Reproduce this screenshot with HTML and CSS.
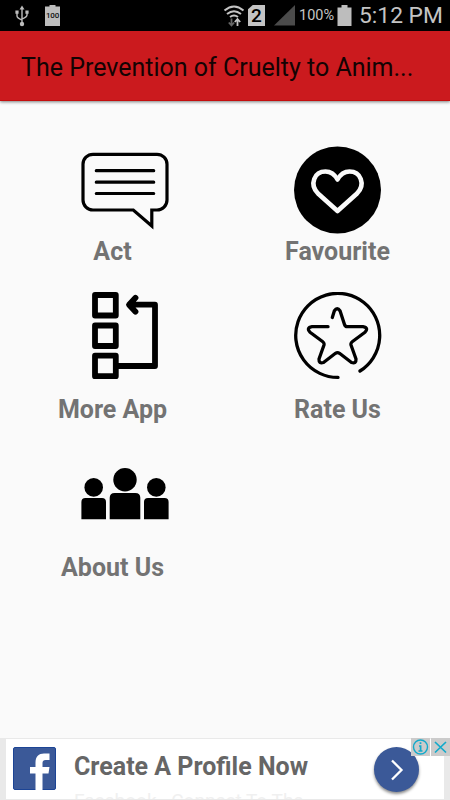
FILE: index.html
```html
<!DOCTYPE html>
<html lang="en">
<head>
    <meta charset="UTF-8">
    <meta name="viewport" content="width=device-width, initial-scale=1.0">
    <title>The Prevention of Cruelty to Animals</title>
    <link rel="stylesheet" href="styles.css">
</head>
<body>
    <div class="status-bar">
        <svg class="usb" width="14" height="22" viewBox="0 0 14 22" fill="none" stroke="#bdbdbd" stroke-width="1.4">
            <path d="M7 3v15M2 8v3q0 2 5 4M12 7v3q0 2-5 4"/>
            <path d="M4.500 4.500L7 .5l2.500 4zM.4 5.500h3.200v3.200H.4zM10.400 5.500h3.200v3.200h-3.200z" fill="#bdbdbd" stroke="none"/>
            <circle cx="7" cy="19" r="2.200" fill="#bdbdbd" stroke="none"/>
        </svg>
        <div class="battery-badge"><span>100</span></div>
        <svg class="wifi" width="22" height="22" viewBox="0 0 22 22" fill="none" stroke="#c4c4c4" stroke-width="2">
            <path d="M1.500 5.500Q11-2.500 20.500 5.500M4 9q7-5.500 14 0M7 12q4-3 8 0"/>
            <path d="M14.500 21v-7M11.800 17l2.700-3 2.700 3" stroke-width="1.800"/>
            <path d="M8.500 13.500v7M5.800 17.500l2.700 3 2.700-3" stroke="#666" stroke-width="1.800"/>
        </svg>
        <div class="sim"><span>2</span></div>
        <svg class="signal" width="21" height="21" viewBox="0 0 21 21"><path d="M0 20.500L21 0v20.500z" fill="#4b4b4b"/></svg>
        <span class="percent">100%</span>
        <svg class="battery" width="15" height="21" viewBox="0 0 15 21"><path d="M4.500 0h6v2.500H14.500V21H.5V2.500h4z" fill="#bdbdbd"/></svg>
        <span class="clock">5:12 PM</span>
    </div>

    <header class="toolbar">
        <h1>The Prevention of Cruelty to Anim...</h1>
    </header>

    <main class="menu">
        <div class="item first shifted">
            <svg viewBox="0 0 88 88" fill="none" stroke="#000" stroke-width="3.200" stroke-linecap="round">
                <path d="M12 8.300h64a10 10 0 0 1 10 10V54a10 10 0 0 1-10 10h-5.200v16L52.300 64H12a10 10 0 0 1-10-10V18.300a10 10 0 0 1 10-10z"/>
                <path d="M15.300 24.700h57.400M15.300 36.200h57.400M15.300 47.500h57.400"/>
            </svg>
            <p>Act</p>
        </div>
        <div class="item first">
            <svg viewBox="0 0 88 88" fill="none">
                <circle cx="43.500" cy="44" r="43.500" fill="#000"/>
                <path d="M43.500 65L24 47.500C15 38 20.500 25.500 31.500 25.500c5.500 0 9.500 3.500 12 8 2.500-4.500 6.500-8 12-8 11 0 16.500 12.500 7.500 22z" stroke="#fafafa" stroke-width="4.600" stroke-linejoin="round"/>
            </svg>
            <p>Favourite</p>
        </div>
        <div class="item shifted">
            <svg viewBox="0 0 88 88" fill="none" stroke="#000" stroke-width="5.800" stroke-linejoin="round">
                <path d="M14 3h20.800v20.500H14zM14 33.500h20.800V54H14zM14 63.700h20.800v20.500H14z"/>
                <path d="M37 74h37V12.700H49M54.500 5.800l-6.500 6.900 6.500 7" stroke-linecap="round"/>
            </svg>
            <p>More App</p>
        </div>
        <div class="item">
            <svg viewBox="0 0 88 88" fill="none" stroke="#000" stroke-width="3.300" stroke-linecap="round" stroke-linejoin="round">
                <path d="M44 85.400A42 42 0 1 1 66 79"/>
                <path d="M38.300 25.500l2-6.500q2.900-4.500 5.800 0l4.400 13.500q.7 2.200 2.800 2.200h15.700q6 1 2 5.500L58.500 49.500q-2 1.500-1.500 3.500l5 14q.3 5-4.500 3.500L45.500 61.300q-2-1.400-4 0L29.500 70.500q-4.800 1.500-4.500-3.500l5-14q.5-2-1.500-3.500L16 40.200q-4-4.500 2-5.500H34"/>
            </svg>
            <p>Rate Us</p>
        </div>
        <div class="item shifted">
            <svg viewBox="0 0 88 88" fill="#000">
                <circle cx="44" cy="29.700" r="11.700"/>
                <circle cx="12.700" cy="37.400" r="9.300"/>
                <circle cx="75.300" cy="37.400" r="9.300"/>
                <path d="M28.700 69.300V48q0-5 5-5h20.600q5 0 5 5v21.300z"/>
                <path d="M.4 69.300V52q0-4 4-4H21q4 0 4 4v17.300zM63 69.300V52q0-4 4-4h16.600q4 0 4 4v17.300z"/>
            </svg>
            <p>About Us</p>
        </div>
    </main>

    <footer class="ad">
        <div class="ad-body">
            <svg class="facebook" width="43" height="43" viewBox="0 0 43 43">
                <rect x=".5" y=".5" width="42" height="42" rx="1.500" fill="#3b5998" stroke="#1c4495"/>
                <path d="M22.500 43V26.500H17V20h5.500v-4.500c0-6 3.300-9 8.500-9h5.500V13h-3.700c-2.800 0-3.300 1.500-3.300 3.500V20h7l-1 6.500h-6V43z" fill="#fff"/>
            </svg>
            <div class="ad-text">
                <h2>Create A Profile Now</h2>
                <p>Facebook - Connect To The</p>
            </div>
            <div class="go">
                <svg width="14" height="22" viewBox="0 0 14 22" fill="none" stroke="#fff" stroke-width="2.300"><path d="M2 1.500l9.500 9.500L2 20.500"/></svg>
            </div>
        </div>
        <div class="ad-choices">
            <svg width="19" height="18" viewBox="0 0 19 18" fill="none" stroke="#12aacb" stroke-width="1.400">
                <circle cx="9.500" cy="9" r="7"/>
                <path d="M9.500 4.200v1.900M8 8h1.600v5M7.500 13h4" stroke-width="1.700"/>
            </svg>
            <svg width="19" height="18" viewBox="0 0 19 18" fill="none" stroke="#12aacb" stroke-width="1.700">
                <path d="M4 4l11 10.500M15 4L4 14.500"/>
            </svg>
        </div>
    </footer>
</body>
</html>
```

FILE: styles.css
```css
* {
    box-sizing: border-box;
}
body {
    font-family: Roboto, "Liberation Sans", sans-serif;
    margin: 0;
    height: 800px;
    display: flex;
    flex-direction: column;
    background-color: #fafafa;
    overflow: hidden;
}
h1, h2, p {
    margin: 0;
}
.status-bar {
    height: 31px;
    padding: 0 9px 0 15px;
    display: flex;
    align-items: center;
    background-color: #000;
    color: #c4c4c4;
    white-space: nowrap;
}
.status-bar svg {
    flex: none;
}
.battery-badge {
    width: 15px;
    height: 21px;
    margin-left: 16px;
    display: flex;
    align-items: center;
    justify-content: center;
    background-color: #bdbdbd;
    color: #111;
    font-size: 8px;
    font-weight: 500;
    letter-spacing: -0.2px;
    clip-path: polygon(0 7%, 30% 7%, 30% 0, 70% 0, 70% 7%, 100% 7%, 100% 100%, 0 100%);
}
.wifi {
    margin-left: auto;
}
.sim {
    width: 17px;
    height: 21px;
    margin-left: 3px;
    display: flex;
    align-items: center;
    justify-content: center;
    background-color: #c4c4c4;
    color: #000;
    font-size: 19px;
    font-weight: 500;
    clip-path: polygon(28% 0, 100% 0, 100% 100%, 0 100%, 0 20%);
}
.signal {
    margin-left: 9px;
}
.percent {
    width: 35px;
    margin-left: 4px;
    font-size: 14.5px;
}
.battery {
    margin-left: 3px;
}
.clock {
    width: 82px;
    margin-left: 7px;
    font-size: 22.8px;
}
.toolbar {
    height: 70px;
    padding-left: 21px;
    display: flex;
    align-items: center;
    background-color: #cb1a1e;
    border-bottom: 1px solid #c40d0d;
    box-shadow: 0 1px 3px rgba(0, 0, 0, 0.5);
}
.toolbar h1 {
    padding-top: 3px;
    font-size: 25px;
    font-weight: 400;
    color: #140303;
    white-space: nowrap;
}
.menu {
    flex: 1;
    padding-top: 45px;
    display: grid;
    grid-template-columns: 1fr 1fr;
    grid-template-rows: 146px 158px 158px;
}
.item {
    display: flex;
    flex-direction: column;
    align-items: center;
    gap: 15px;
}
.item.first {
    gap: 3px;
}
.item svg {
    width: 88px;
    height: 88px;
}
.item.shifted svg {
    margin-left: 25px;
}
.item p {
    font-size: 25px;
    line-height: 30px;
    font-weight: 700;
    color: #737373;
}
.ad {
    position: relative;
    height: 62px;
    padding: 1px 6px;
    background-color: #e9e9e9;
}
.ad-body {
    height: 60px;
    padding: 8px 25px 0 7px;
    display: flex;
    align-items: flex-start;
    background-color: #fff;
    overflow: hidden;
}
.ad-text {
    margin-left: 18px;
    flex: 1;
    white-space: nowrap;
}
.ad-text h2 {
    padding-top: 5px;
    font-size: 25px;
    line-height: 30px;
    font-weight: 700;
    color: #666;
}
.ad-text p {
    margin-top: 8px;
    font-size: 19px;
    line-height: 22px;
    color: #f0f0f0;
}
.go {
    width: 45px;
    height: 45px;
    display: flex;
    align-items: center;
    justify-content: center;
    border-radius: 50%;
    background-color: #3b5998;
    box-shadow: 0 2px 3px rgba(0, 0, 0, 0.45);
}
.ad-choices {
    position: absolute;
    top: 0;
    right: 0;
    display: flex;
    gap: 1px;
}
.ad-choices svg {
    background-color: #cbcbcb;
}
```
